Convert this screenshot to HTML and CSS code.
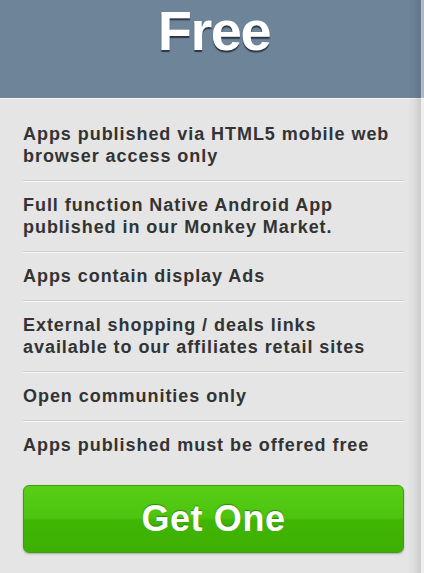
FILE: index.html
```html
<!DOCTYPE html>
<html>
<head>
<meta charset="utf-8">
<link rel="stylesheet" href="styles.css">
</head>
<body>
<div class="page">
  <header class="plan-head">
    <h1 class="plan-title">Free</h1>
  </header>
  <ul class="features">
    <li class="feature">Apps published via HTML5 mobile web browser access only</li>
    <li class="feature">Full function Native Android App published in our Monkey Market.</li>
    <li class="feature">Apps contain display Ads</li>
    <li class="feature">External shopping / deals links available to our affiliates retail sites</li>
    <li class="feature">Open communities only</li>
    <li class="feature last">Apps published must be offered free</li>
  </ul>
  <div class="cta">
    <a class="btn-get" href="#">Get One</a>
  </div>
  <div class="edge-shadow"></div>
</div>
</body>
</html>
```
FILE: styles.css
```css
html, body {
  margin: 0;
  padding: 0;
  height: 100%;
}
body {
  background: #e5e5e5;
  font-family: "Liberation Sans", Arial, Helvetica, sans-serif;
  overflow: hidden;
}
.page {
  position: relative;
  width: 424px;
  height: 573px;
  background: #e5e5e5;
}
.plan-head {
  height: 98px;
  background: #6e8499;
  border-bottom: 1px solid #f4f4f4;
  box-sizing: content-box;
}
.plan-title {
  margin: 0;
  padding-top: 0;
  padding-left: 4px;
  font-size: 56px;
  line-height: 62px;
  font-weight: bold;
  color: #ffffff;
  text-align: center;
  text-shadow: 0 2px 1px rgba(30, 40, 55, 0.85);
  letter-spacing: -1.5px;
}
.features {
  list-style: none;
  margin: 11px 20px 0 23px;
  padding: 0;
}
.feature {
  padding: 13px 0;
  font-size: 18px;
  line-height: 22px;
  font-weight: bold;
  color: #333333;
  letter-spacing: 0.95px;
  border-bottom: 1px solid #cfcfcf;
  box-shadow: 0 1px 0 #f6f6f6;
}
.feature.last {
  border-bottom: none;
  box-shadow: none;
}
.cta {
  padding: 16px 20px 0 23px;
}
.btn-get {
  display: block;
  height: 66px;
  border: 1px solid #3aa10a;
  border-radius: 6px;
  background: linear-gradient(to bottom, #58ce16 0%, #4cc40e 48%, #40b604 52%, #3daf02 100%);
  box-shadow: 0 1px 2px rgba(0, 0, 0, 0.25);
  color: #ffffff;
  font-size: 36px;
  font-weight: bold;
  line-height: 66px;
  letter-spacing: 0.6px;
  text-align: center;
  text-decoration: none;
  text-shadow: 0 -1px 1px rgba(30, 90, 0, 0.6);
}
.edge-shadow {
  position: absolute;
  top: 0;
  right: 0;
  width: 16px;
  height: 573px;
  background: linear-gradient(to right, rgba(0,0,0,0) 0%, rgba(0,0,0,0.04) 40%, rgba(0,0,0,0.11) 78%, rgba(255,255,255,0.5) 80%, rgba(255,255,255,0.4) 100%);
  pointer-events: none;
}
```
